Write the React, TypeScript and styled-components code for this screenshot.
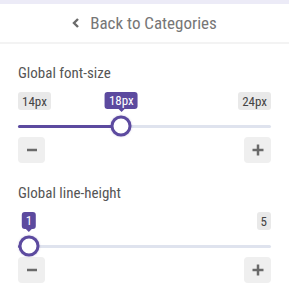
import React from "react";
import styled, { createGlobalStyle } from "styled-components";

const Global = createGlobalStyle`
  html, body { margin: 0; padding: 0; background: #ffffff; }
  body { font-family: "Roboto Condensed", Roboto, "Liberation Sans", sans-serif; }
`;

const PURPLE = "#5c4a9f";

const Page = styled.div`
  width: 289px;
  height: 300px;
  overflow: hidden;
  background: #fff;
`;

const TopStrip = styled.div`
  height: 4px;
  background: #ecebf7;
`;

const Header = styled.div`
  height: 38px;
  display: flex;
  align-items: center;
  justify-content: center;
  gap: 10px;
  color: #767676;
  font-size: 17px;
  border-bottom: 2px solid #f3f3f3;
`;

const Content = styled.div`
  padding: 21px 18px 0;
  display: flex;
  flex-direction: column;
  gap: 22px;
`;

const Section = styled.div`
  display: flex;
  flex-direction: column;
`;

const Label = styled.div`
  font-size: 15px;
  line-height: 16px;
  color: #555;
`;

const BadgeRow = styled.div`
  position: relative;
  margin-top: 11px;
  height: 18px;
  display: flex;
  justify-content: space-between;
  align-items: center;
`;

const Badge = styled.span<{ $hidden?: boolean }>`
  display: inline-flex;
  align-items: center;
  height: 18px;
  padding: 0 4px;
  border-radius: 3px;
  background: #e9e9e9;
  color: #444;
  font-size: 13px;
  visibility: ${(p) => (p.$hidden ? "hidden" : "visible")};
`;

const ValueBadge = styled.span`
  position: absolute;
  top: 0;
  transform: translateX(-50%);
  display: inline-flex;
  align-items: center;
  height: 17px;
  padding: 0 4px;
  border-radius: 3px;
  background: ${PURPLE};
  color: #fff;
  font-size: 13px;
  &::after {
    content: "";
    position: absolute;
    left: 50%;
    bottom: -3px;
    margin-left: -3px;
    border-left: 3px solid transparent;
    border-right: 3px solid transparent;
    border-top: 3px solid ${PURPLE};
  }
`;

const SliderRow = styled.div`
  position: relative;
  margin-top: 5px;
  height: 22px;
  display: flex;
  align-items: center;
`;

const Track = styled.div`
  position: relative;
  width: 100%;
  height: 3px;
  border-radius: 2px;
  background: #dfe3ee;
`;

const Fill = styled.div`
  position: absolute;
  left: 0;
  top: 0;
  height: 3px;
  border-radius: 2px;
  background: ${PURPLE};
`;

const Thumb = styled.div`
  position: absolute;
  top: 50%;
  width: 21px;
  height: 21px;
  box-sizing: border-box;
  border-radius: 50%;
  border: 3px solid ${PURPLE};
  background: #fff;
  transform: translate(-50%, -50%);
  box-shadow: 0 0 2px rgba(92, 74, 159, 0.35);
`;

const Buttons = styled.div`
  display: flex;
  justify-content: space-between;
`;

const StepButton = styled.button`
  width: 27px;
  height: 26px;
  padding: 0;
  border: none;
  border-radius: 4px;
  background: #efefef;
  display: flex;
  align-items: center;
  justify-content: center;
`;

const Chevron = () => (
  <svg width="8" height="10" viewBox="0 0 8 10">
    <polyline points="6,1 2,5 6,9" fill="none" stroke="#6a6a6a" strokeWidth="2.4" />
  </svg>
);

const Minus = () => (
  <svg width="12" height="12" viewBox="0 0 12 12">
    <line x1="1" y1="6" x2="11" y2="6" stroke="#6a6a6a" strokeWidth="2.5" />
  </svg>
);

const Plus = () => (
  <svg width="12" height="12" viewBox="0 0 12 12">
    <line x1="0.5" y1="6" x2="11.5" y2="6" stroke="#6a6a6a" strokeWidth="2.5" />
    <line x1="6" y1="0.5" x2="6" y2="11.5" stroke="#6a6a6a" strokeWidth="2.5" />
  </svg>
);

const TRACK_W = 253;
const INSET = 11;

type SliderProps = {
  label: string;
  min: number;
  max: number;
  value: number;
  unit: string;
};

const SliderSection = ({ label, min, max, value, unit }: SliderProps) => {
  const frac = (value - min) / (max - min);
  const x = INSET + frac * (TRACK_W - 2 * INSET);
  const nearMin = x < 45;
  const nearMax = x > TRACK_W - 45;
  return (
    <Section>
      <Label>{label}</Label>
      <BadgeRow>
        <Badge $hidden={nearMin}>{min}{unit}</Badge>
        <Badge $hidden={nearMax}>{max}{unit}</Badge>
        <ValueBadge style={{ left: x }}>{value}{unit}</ValueBadge>
      </BadgeRow>
      <SliderRow>
        <Track>
          <Fill style={{ width: x }} />
          <Thumb style={{ left: x }} />
        </Track>
      </SliderRow>
      <Buttons>
        <StepButton aria-label="decrease"><Minus /></StepButton>
        <StepButton aria-label="increase"><Plus /></StepButton>
      </Buttons>
    </Section>
  );
};

export default function App() {
  return (
    <Page>
      <Global />
      <TopStrip />
      <Header>
        <Chevron />
        <span>Back to Categories</span>
      </Header>
      <Content>
        <SliderSection label="Global font-size" min={14} max={24} value={18} unit="px" />
        <SliderSection label="Global line-height" min={1} max={5} value={1} unit="" />
      </Content>
    </Page>
  );
}
